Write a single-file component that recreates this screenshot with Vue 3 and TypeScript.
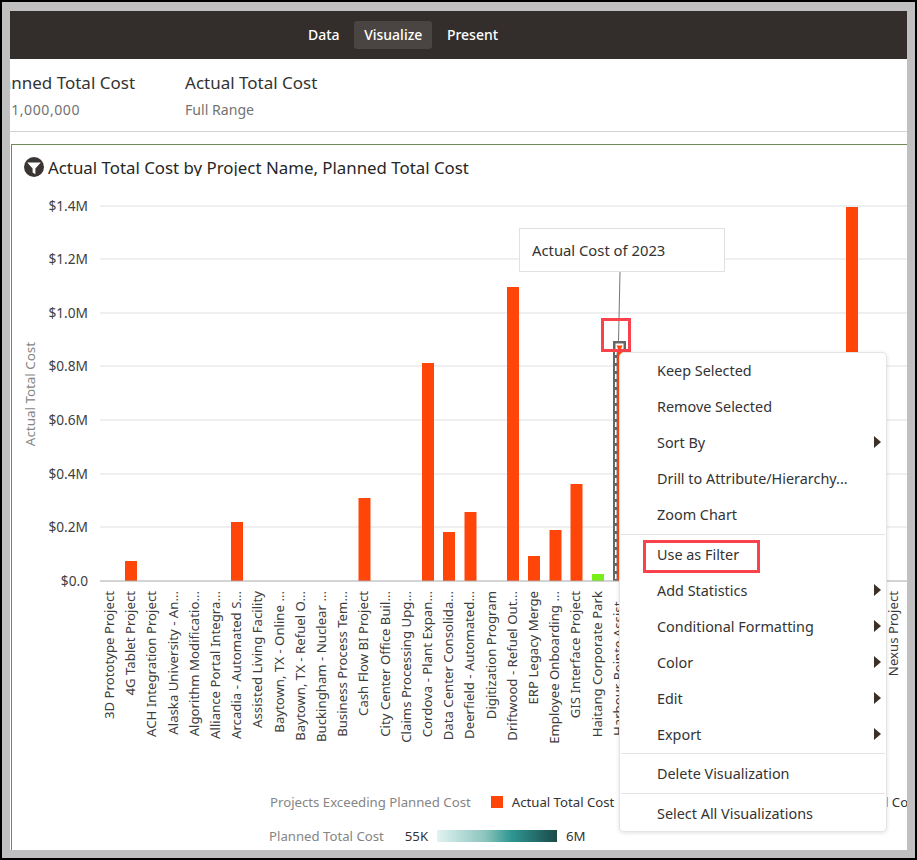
<script setup lang="ts">
const ticks = [
  { label: '$1.4M', y: 206 },
  { label: '$1.2M', y: 259 },
  { label: '$1.0M', y: 313 },
  { label: '$0.8M', y: 366 },
  { label: '$0.6M', y: 420 },
  { label: '$0.4M', y: 474 },
  { label: '$0.2M', y: 527 },
  { label: '$0.0', y: 581 },
]

const names = [
  '3D Prototype Project', '4G Tablet Project', 'ACH Integration Project', 'Alaska University - An...',
  'Algorithm Modificatio...', 'Alliance Portal Integra...', 'Arcadia - Automated S...', 'Assisted Living Facility',
  'Baytown, TX - Online ...', 'Baytown, TX - Refuel O...', 'Buckingham - Nuclear ...', 'Business Process Tem...',
  'Cash Flow BI Project', 'City Center Office Buil...', 'Claims Processing Upg...', 'Cordova - Plant Expan...',
  'Data Center Consolida...', 'Deerfield - Automated...', 'Digitization Program', 'Driftwood - Refuel Out...',
  'ERP Legacy Merge', 'Employee Onboarding ...', 'GIS Interface Project', 'Haitang Corporate Park',
  'Harbour Pointe Assist...',
]
const labels = names.map((name, i) => ({ name, x: 110 + i * 21.2 }))

const bars = [
  { x: 125, top: 561 }, { x: 231, top: 522 }, { x: 358.5, top: 498 }, { x: 422, top: 363 },
  { x: 443, top: 532 }, { x: 464.5, top: 512 }, { x: 507, top: 287 }, { x: 528, top: 556 },
  { x: 549.5, top: 530 }, { x: 570.5, top: 484 }, { x: 846, top: 207 },
]

type MenuEntry = { text?: string; arrow?: boolean; sep?: string }
const menu: MenuEntry[] = [
  { text: 'Keep Selected' }, { text: 'Remove Selected' }, { text: 'Sort By', arrow: true },
  { text: 'Drill to Attribute/Hierarchy...' }, { text: 'Zoom Chart' }, { sep: 'first' },
  { text: 'Use as Filter' }, { text: 'Add Statistics', arrow: true }, { text: 'Conditional Formatting', arrow: true },
  { text: 'Color', arrow: true }, { text: 'Edit', arrow: true }, { text: 'Export', arrow: true }, { sep: 'tight' },
  { text: 'Delete Visualization' }, { sep: 'first' }, { text: 'Select All Visualizations' },
]
</script>

<template>
  <div class="page">
    <div class="screen">
      <header class="topbar">
        <nav class="tabs">
          <span class="tab">Data</span>
          <span class="tab active">Visualize</span>
          <span class="tab">Present</span>
        </nav>
      </header>

      <section class="filters">
        <div class="filter first">
          <div class="filter-name">Planned Total Cost</div>
          <div class="filter-value">0 - 1,000,000</div>
        </div>
        <div class="filter">
          <div class="filter-name">Actual Total Cost</div>
          <div class="filter-value">Full Range</div>
        </div>
      </section>

      <section class="panel">
        <div class="title-row">
          <svg class="funnel" viewBox="0 0 20 20" width="20" height="20">
            <circle cx="10" cy="10" r="10" fill="#3a3532" />
            <path d="M3.2 5.6h13.6L11.4 11.6v5.6l-2.8-1.6v-4z" fill="#fff" />
          </svg>
          <h2 class="title">Actual Total Cost by Project Name, Planned Total Cost</h2>
        </div>

        <div class="chart">
          <svg class="plot" viewBox="12 180 895 670" width="895" height="670">
            <text class="axis-title" transform="rotate(-90 35 394)" x="35" y="394" text-anchor="middle">Actual Total Cost</text>
            <g v-for="t in ticks" :key="t.label">
              <text class="tick" x="88" :y="t.y + 4.5" text-anchor="end">{{ t.label }}</text>
              <line v-if="t.y !== 581" x1="100" x2="907" :y1="t.y" :y2="t.y" stroke="#e7eaed" stroke-width="1.4" />
            </g>
            <rect v-for="b in bars" :key="b.x" :x="b.x" :y="b.top" width="12" :height="581 - b.top" fill="#ff4508" />
            <rect x="592" y="574" width="12" height="7" fill="#77f01a" />
            <rect x="613" y="341" width="13" height="240" fill="#666" />
            <rect x="615.5" y="343.5" width="8" height="9" fill="#fff" />
            <polygon points="616.5,345.5 622.5,345.5 619.5,352" fill="#ff4508" />
            <rect x="617" y="350" width="6" height="231" fill="#ff4508" />
            <line x1="615.8" x2="615.8" y1="350" y2="580" stroke="#fff" stroke-width="1.6" stroke-dasharray="5 3" />
            <line x1="100" x2="907" y1="581" y2="581" stroke="#a9a9a9" stroke-width="1.2" />
            <text
              v-for="l in labels"
              :key="l.name"
              class="cat"
              :x="l.x"
              y="591"
              :transform="`rotate(-90 ${l.x} 591)`"
              text-anchor="end"
              dy="4"
            >{{ l.name }}</text>
            <text class="cat" x="894" y="591" transform="rotate(-90 894 591)" text-anchor="end" dy="4">Nexus Project</text>
            <line x1="620" y1="272" x2="618.5" y2="342" stroke="#777" stroke-width="1" />
          </svg>

          <div class="legends">
            <div class="legend-row">
              <span class="legend-label">Projects Exceeding Planned Cost</span>
              <span class="swatch"></span>
              <span class="legend-text">Actual Total Cost</span>
              <span class="legend-text second">Planned Total Cost</span>
            </div>
            <div class="legend-row scale">
              <span class="legend-label">Planned Total Cost</span>
              <span class="legend-text low">55K</span>
              <span class="ramp"></span>
              <span class="legend-text">6M</span>
            </div>
          </div>

          <div class="callout">Actual Cost of 2023</div>
          <div class="mark mark-bar"></div>

          <div class="menu">
            <template v-for="(m, i) in menu" :key="i">
              <div v-if="m.sep" class="sep" :class="m.sep"></div>
              <div v-else class="item">
                <span class="item-text">{{ m.text }}</span>
                <span v-if="m.arrow" class="arrow"></span>
              </div>
            </template>
          </div>
          <div class="mark mark-item"></div>
        </div>
      </section>
    </div>
  </div>
</template>

<style>
html, body { margin: 0; background: #000; }
</style>

<style scoped>
.page {
  width: 917px;
  height: 860px;
  box-sizing: border-box;
  border: 2px solid #000;
  background: #c0c0c0;
  padding: 9px 8px 8px 8px;
  font-family: "Noto Sans", "Open Sans", sans-serif;
  color: #2d2d2d;
  overflow: hidden;
}
.screen {
  width: 897px;
  height: 839px;
  background: #fff;
  overflow: hidden;
}
.topbar {
  height: 48px;
  background: #332e2b;
  display: flex;
  align-items: center;
  padding-left: 288px;
}
.tabs {
  display: flex;
  gap: 4.5px;
  align-items: center;
}
.tab {
  color: #fff;
  font-size: 14px;
  font-weight: 500;
  padding: 0 10px;
  height: 28px;
  line-height: 28px;
  border-radius: 3px;
}
.tab.active { background: #4a4543; }
.filters {
  height: 73px;
  box-sizing: border-box;
  border-bottom: 1px solid #d2d2d2;
  display: flex;
  gap: 50px;
  margin-left: -23px;
  padding-top: 12px;
}
.filter-name { font-size: 17px; line-height: 23px; color: #333; white-space: nowrap; }
.filter-value { font-size: 14.1px; line-height: 18px; margin-top: 7px; color: #737373; white-space: nowrap; }
.first .filter-value { padding-left: 2px; letter-spacing: 0.55px; }
.panel {
  margin: 12px 0 0 1px;
  border-top: 1px solid #6d8a58;
  border-left: 1px solid #6d8a58;
  height: 706px;
}
.title-row {
  display: flex;
  align-items: flex-start;
  gap: 4px;
  height: 35px;
  padding: 12px 0 0 12px;
  box-sizing: border-box;
}
.funnel { flex: none; }
.title {
  margin: 1px 0 0;
  font-size: 16.85px;
  font-weight: 400;
  line-height: 20px;
  height: 18px;
  overflow: hidden;
  white-space: nowrap;
  color: #262626;
}
.chart {
  position: relative;
  height: 670px;
  width: 895px;
}
.plot { display: block; position: absolute; left: 0; top: 0; }
.tick { font-size: 13.7px; fill: #404040; }
.axis-title { font-size: 13.4px; fill: #858585; }
.cat { font-size: 13.2px; fill: #3d3d3d; }
.legends {
  position: absolute;
  top: 612px;
  left: 0;
  width: 895px;
  overflow: hidden;
}
.legend-row {
  display: flex;
  align-items: center;
  height: 20px;
  font-size: 13.2px;
  padding-left: 258px;
  white-space: nowrap;
}
.legend-row.scale { margin-top: 14px; padding-left: 257px; }
.legend-label { color: #858585; flex: none; }
.legend-text { color: #333; flex: none; }
.swatch {
  flex: none;
  width: 12px;
  height: 12px;
  background: #ff4508;
  margin: 0 9px 0 20px;
}
.second { margin-left: 190px; }
.low { margin-left: 21px; }
.ramp {
  flex: none;
  width: 120px;
  height: 12px;
  margin: 0 9px 0 9px;
  background: linear-gradient(90deg, #e0f3f1 0%, #8cc4be 40%, #2f9691 62%, #1b4a4a 100%);
}
.callout {
  position: absolute;
  left: 507px;
  top: 48px;
  width: 206px;
  height: 44px;
  box-sizing: border-box;
  border: 1px solid #e1e1e1;
  background: rgba(255, 255, 255, 0.95);
  padding-left: 12px;
  line-height: 42px;
  font-size: 14.8px;
  color: #333;
}
.mark {
  position: absolute;
  box-sizing: border-box;
  border: 3px solid #f9424c;
}
.mark-bar { left: 589px; top: 138px; width: 30px; height: 34px; }
.mark-item { left: 631px; top: 360px; width: 117px; height: 33px; }
.menu {
  position: absolute;
  left: 607px;
  top: 172px;
  width: 268px;
  height: 480px;
  box-sizing: border-box;
  background: #fff;
  border: 1px solid #e4e4e4;
  border-radius: 5px;
  box-shadow: 0 1px 4px rgba(0, 0, 0, 0.12);
  overflow: hidden;
}
.item {
  height: 36px;
  padding: 0 5px 0 37px;
  display: flex;
  align-items: center;
  justify-content: space-between;
  font-size: 14.4px;
  color: #333;
  white-space: nowrap;
}
.item-text { margin-top: -2px; }
.sep { height: 1px; background: #e4e4e4; margin: 1px 1px 2px; }
.sep.tight { margin-top: 0; }
.arrow {
  width: 0;
  height: 0;
  border-style: solid;
  border-width: 6px 0 6px 7px;
  border-color: transparent transparent transparent #3d3028;
  margin-top: -2px;
}
</style>
